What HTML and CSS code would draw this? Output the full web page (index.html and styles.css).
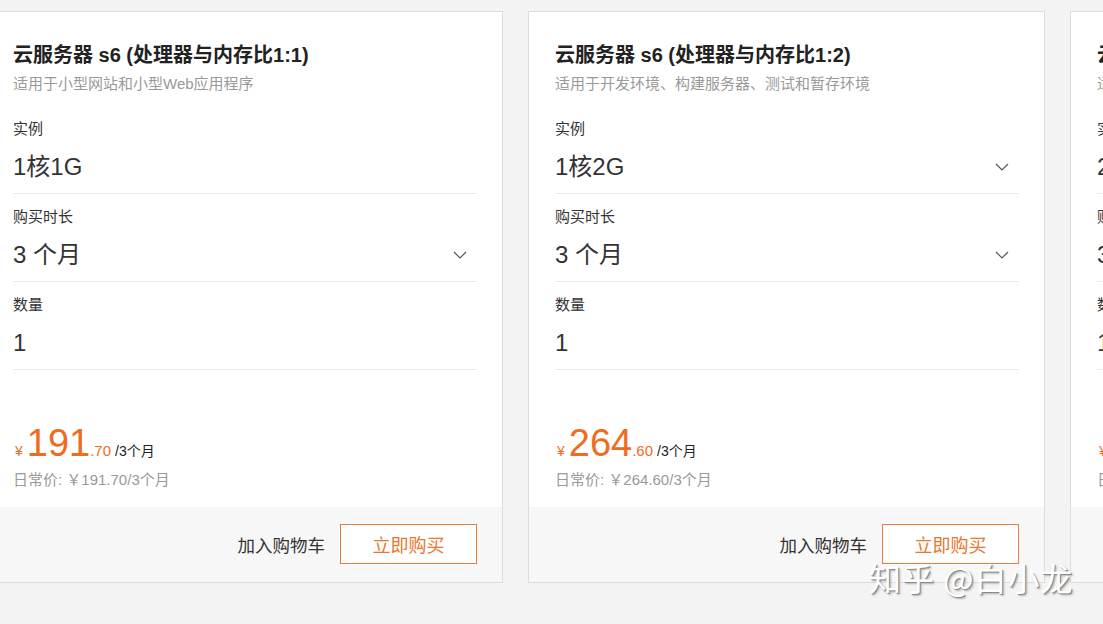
FILE: index.html
```html
<!DOCTYPE html>
<html lang="zh-CN">
<head>
<meta charset="utf-8">
<title>云服务器 s6</title>
<link rel="stylesheet" href="styles.css">
</head>
<body>
<div class="track">
  <div class="card">
    <div class="body">
      <h2 class="title">云服务器 s6 (处理器与内存比1:1)</h2>
      <p class="desc">适用于小型网站和小型Web应用程序</p>
      <div class="field">
        <div class="label">实例</div>
        <div class="value"><span>1核1G</span></div>
      </div>
      <div class="field">
        <div class="label">购买时长</div>
        <div class="value"><span>3 个月</span><svg class="chev" width="14" height="8" viewBox="0 0 14 8"><polyline points="1,1 7,7 13,1" fill="none" stroke="#555" stroke-width="1.2"/></svg></div>
      </div>
      <div class="field">
        <div class="label">数量</div>
        <div class="value"><span>1</span></div>
      </div>
      <div class="price"><span class="yen">¥</span><span class="int">191</span><span class="dec">.70</span><span class="per">/3个月</span></div>
      <div class="orig">日常价: ￥191.70/3个月</div>
    </div>
    <div class="foot">
      <span class="cart">加入购物车</span>
      <span class="buy">立即购买</span>
    </div>
  </div>

  <div class="card">
    <div class="body">
      <h2 class="title">云服务器 s6 (处理器与内存比1:2)</h2>
      <p class="desc">适用于开发环境、构建服务器、测试和暂存环境</p>
      <div class="field">
        <div class="label">实例</div>
        <div class="value"><span>1核2G</span><svg class="chev" width="14" height="8" viewBox="0 0 14 8"><polyline points="1,1 7,7 13,1" fill="none" stroke="#555" stroke-width="1.2"/></svg></div>
      </div>
      <div class="field">
        <div class="label">购买时长</div>
        <div class="value"><span>3 个月</span><svg class="chev" width="14" height="8" viewBox="0 0 14 8"><polyline points="1,1 7,7 13,1" fill="none" stroke="#555" stroke-width="1.2"/></svg></div>
      </div>
      <div class="field">
        <div class="label">数量</div>
        <div class="value"><span>1</span></div>
      </div>
      <div class="price"><span class="yen">¥</span><span class="int">264</span><span class="dec">.60</span><span class="per">/3个月</span></div>
      <div class="orig">日常价: ￥264.60/3个月</div>
    </div>
    <div class="foot">
      <span class="cart">加入购物车</span>
      <span class="buy">立即购买</span>
    </div>
  </div>

  <div class="card">
    <div class="body">
      <h2 class="title">云服务器 s6 (处理器与内存比1:4)</h2>
      <p class="desc">适用于中小型数据库和企业应用</p>
      <div class="field">
        <div class="label">实例</div>
        <div class="value"><span>2核8G</span><svg class="chev" width="14" height="8" viewBox="0 0 14 8"><polyline points="1,1 7,7 13,1" fill="none" stroke="#555" stroke-width="1.2"/></svg></div>
      </div>
      <div class="field">
        <div class="label">购买时长</div>
        <div class="value"><span>3 个月</span><svg class="chev" width="14" height="8" viewBox="0 0 14 8"><polyline points="1,1 7,7 13,1" fill="none" stroke="#555" stroke-width="1.2"/></svg></div>
      </div>
      <div class="field">
        <div class="label">数量</div>
        <div class="value"><span>1</span></div>
      </div>
      <div class="price"><span class="yen">¥</span><span class="int">798</span><span class="dec">.30</span><span class="per">/3个月</span></div>
      <div class="orig">日常价: ￥798.30/3个月</div>
    </div>
    <div class="foot">
      <span class="cart">加入购物车</span>
      <span class="buy">立即购买</span>
    </div>
  </div>
</div>
<div class="watermark">知乎 @白小龙</div>
</body>
</html>
```
FILE: styles.css
```css
html, body {
  margin: 0;
  padding: 0;
}
body {
  width: 1103px;
  height: 624px;
  overflow: hidden;
  background: #f3f3f3;
  font-family: "Liberation Sans", "Noto Sans CJK SC", Arial, sans-serif;
  color: #333;
  position: relative;
}
.track {
  display: flex;
  gap: 25px;
  margin-left: -14px;
  padding-top: 11px;
}
.card {
  flex: 0 0 517px;
  box-sizing: border-box;
  width: 517px;
  height: 572px;
  background: #fff;
  border: 1px solid #dcdcdc;
  display: flex;
  flex-direction: column;
}
.body {
  flex: 1;
  padding: 29px 25px 0 26px;
}
.title {
  margin: 0;
  font-size: 20px;
  line-height: 28px;
  font-weight: bold;
  color: #222;
  white-space: nowrap;
}
.desc {
  margin: 4px 0 11px;
  font-size: 15px;
  line-height: 22px;
  color: #999;
  white-space: nowrap;
}
.field {
  padding: 13px 0 10px;
  border-bottom: 1px solid #ececec;
}
.label {
  font-size: 15px;
  line-height: 20px;
  color: #333;
}
.value {
  margin-top: 12px;
  height: 32px;
  font-size: 24px;
  line-height: 32px;
  color: #333;
  display: flex;
  align-items: center;
  justify-content: space-between;
}
.chev {
  margin-right: 10px;
}
.price {
  margin-top: 51px;
  display: flex;
  align-items: baseline;
  line-height: 44px;
  height: 44px;
  white-space: nowrap;
}
.yen {
  font-size: 14px;
  color: #ef6c1f;
  margin-left: 2px;
  margin-right: 4px;
}
.int {
  font-size: 38px;
  color: #ef6c1f;
}
.dec {
  font-size: 15px;
  color: #ef6c1f;
  margin-right: 4px;
}
.per {
  font-size: 14px;
  color: #222;
}
.orig {
  margin-top: 5px;
  font-size: 15px;
  line-height: 20px;
  color: #999;
  white-space: nowrap;
}
.foot {
  height: 75px;
  box-sizing: border-box;
  background: #f7f7f7;
  display: flex;
  align-items: center;
  justify-content: flex-end;
  padding: 0 25px 1px 0;
}
.cart {
  font-size: 17.5px;
  color: #333;
  margin-right: 15px;
}
.buy {
  box-sizing: border-box;
  width: 137px;
  height: 40px;
  border: 1px solid #e3803c;
  background: #fff;
  color: #e8772e;
  font-size: 18px;
  display: flex;
  align-items: center;
  justify-content: center;
}
.watermark {
  position: absolute;
  left: 869px;
  top: 558px;
  font-size: 32px;
  line-height: 38px;
  letter-spacing: 1px;
  font-family: "Noto Sans CJK SC", sans-serif;
  color: #fff;
  text-shadow: 1px 1px 0 #8a8a8a, 2px 2px 2px #b0b0b0;
  white-space: nowrap;
}
```
